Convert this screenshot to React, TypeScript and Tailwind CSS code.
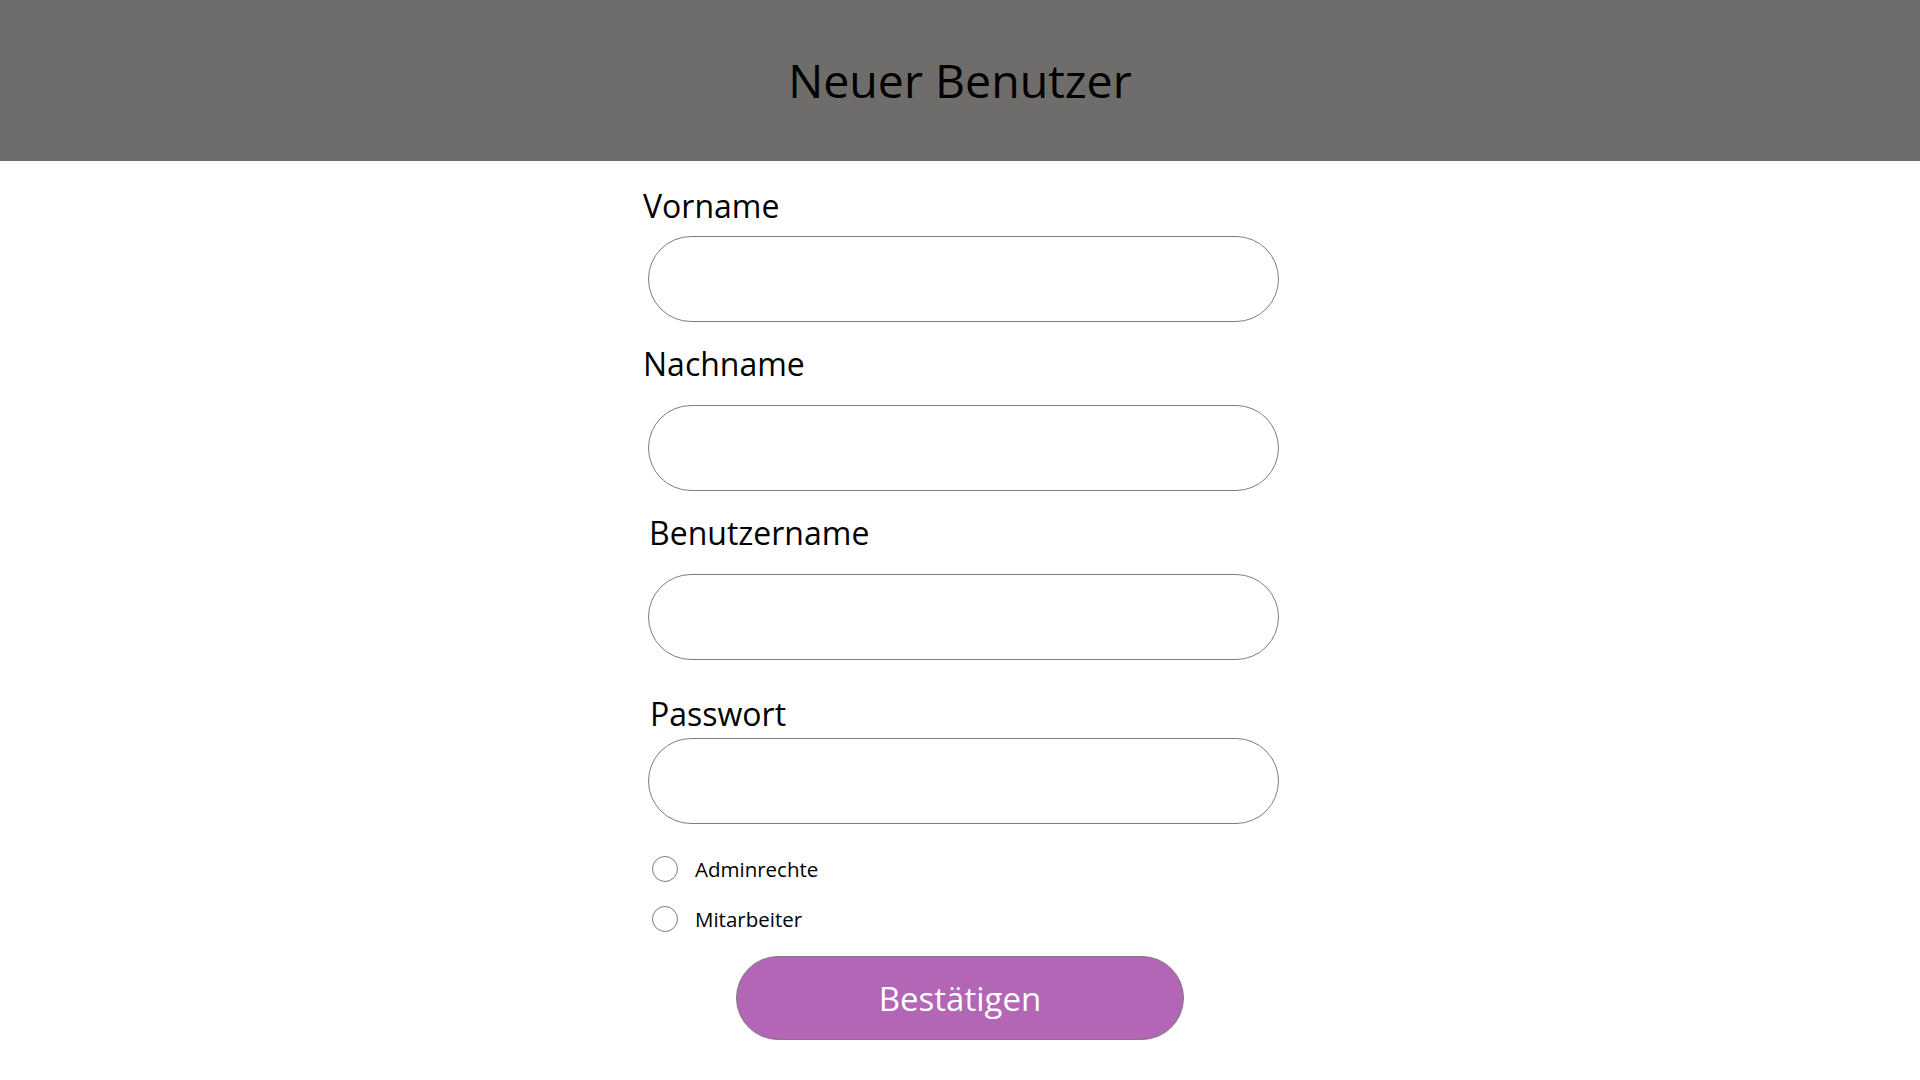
import React from "react";

const font = { fontFamily: '"Open Sans", "Noto Sans", sans-serif' };

function Field({ label, labelClass, gapClass, topClass }: { label: string; labelClass: string; gapClass: string; topClass: string }) {
  return (
    <div className={`flex flex-col ${topClass}`}>
      <div className={`h-[40px] text-[32px] leading-[40px] text-black ${labelClass}`}>{label}</div>
      <div className={`ml-[8px] w-[631px] h-[86px] rounded-full border border-[#7d7d7d] bg-white ${gapClass}`} />
    </div>
  );
}

function Radio({ label }: { label: string }) {
  return (
    <div className="flex items-center h-[40px] ml-[12px]">
      <div className="w-[26px] h-[26px] rounded-full border border-[#7d7d7d] bg-white" />
      <span className="ml-[17px] text-[20.5px] leading-[28px] text-black">{label}</span>
    </div>
  );
}

export default function App() {
  return (
    <div className="w-[1920px] h-[1080px] bg-white overflow-hidden" style={font}>
      <div className="h-[161px] bg-[#6e6d6b] flex items-center justify-center">
        <h1 className="text-[46.5px] leading-none text-black font-normal">Neuer Benutzer</h1>
      </div>
      <div className="w-[640px] mx-auto flex flex-col">
        <Field label="Vorname" labelClass="ml-[3px]" gapClass="mt-[10px]" topClass="mt-[25px]" />
        <Field label="Nachname" labelClass="ml-[3px]" gapClass="mt-[21px]" topClass="mt-[22px]" />
        <Field label="Benutzername" labelClass="ml-[9px]" gapClass="mt-[21px]" topClass="mt-[22px]" />
        <Field label="Passwort" labelClass="ml-[10px]" gapClass="mt-[4px]" topClass="mt-[34px]" />
        <div className="mt-[25px] flex flex-col gap-[10px]">
          <Radio label="Adminrechte" />
          <Radio label="Mitarbeiter" />
        </div>
        <button className="mt-[17px] ml-[96px] w-[448px] h-[84px] rounded-full bg-[#b366b5] border border-[#7d7d7d] text-white text-[33px] leading-none flex items-center justify-center">
          Bestätigen
        </button>
      </div>
    </div>
  );
}
